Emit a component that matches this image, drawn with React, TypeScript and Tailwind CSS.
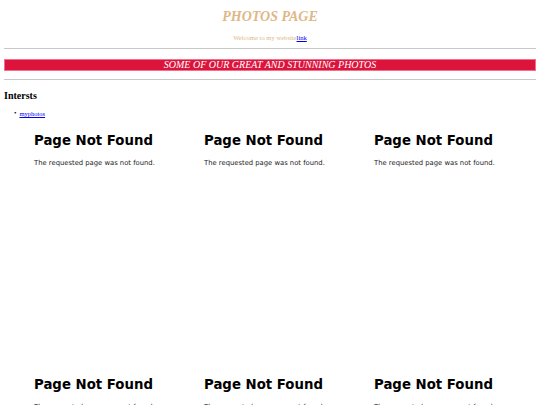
const Frame: React.FC = () => {
  return (
    <div className="h-[244px] w-[170px] px-[8px] pt-[8px]" style={{ fontFamily: '"DejaVu Sans", Verdana, sans-serif' }}>
      <h2 className="text-[13.3px] font-bold leading-[18px] text-black">Page Not Found</h2>
      <p className="mt-[8px] text-[6.8px] leading-[10px] text-[#222]">The requested page was not found.</p>
    </div>
  )
}

const App: React.FC = () => {
  return (
    <main className="h-[405px] w-full overflow-hidden bg-white px-[4px] font-['Liberation_Serif',serif]">
      <h1 className="pt-[8px] text-center text-[14px] font-bold italic leading-[18px] text-[#deb887]">
        PHOTOS PAGE
      </h1>
      <p className="mt-[7px] text-center text-[6.6px] leading-[9px] text-[#deb887]">
        Welcome to my website
        <a href="#" className="text-[#0000ee] underline">
          link
        </a>
      </p>

      <hr className="mt-[6px] border-t border-[#c8c8c8]" />

      {/* BANNER */}
      <div className="mt-[10px] border border-[#f07090] bg-[#dc143c] text-center text-[10px] italic leading-[10px] text-white">
        SOME OF OUR GREAT AND STUNNING PHOTOS
      </div>

      <hr className="mt-[8px] border-t border-[#c8c8c8]" />

      <h3 className="mt-[9px] text-[10px] font-bold leading-[13px] text-black">Intersts</h3>
      <ul className="mt-[7px] pl-[10px] text-[6.5px] leading-[9px]">
        <li className="flex items-center gap-[3px]">
          <span className="text-[7px] text-black">•</span>
          <a href="#" className="text-[#0000ee] underline">
            myphotos
          </a>
        </li>
      </ul>

      {/* FRAMES */}
      <div className="mt-[6px] grid grid-cols-[170px_170px_170px] pl-[22px]">
        <Frame />
        <Frame />
        <Frame />
        <Frame />
        <Frame />
        <Frame />
      </div>
    </main>
  )
}

export default App
